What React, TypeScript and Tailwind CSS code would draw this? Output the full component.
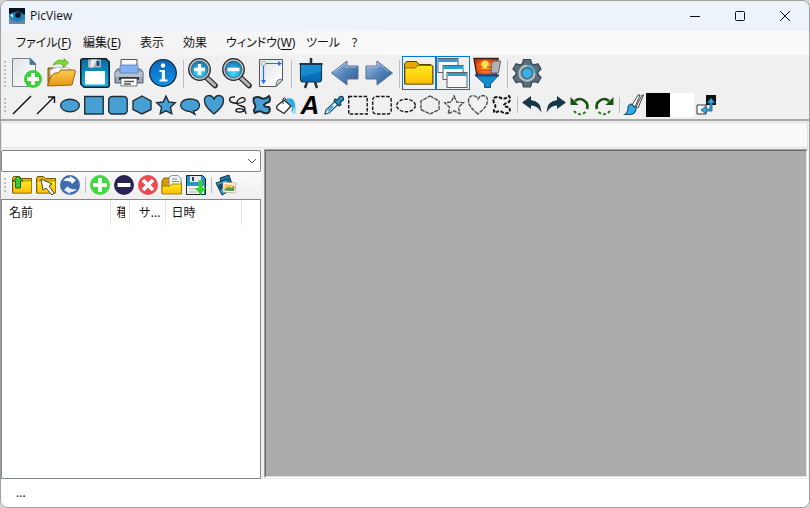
import React from "react";

type Kids = { children?: React.ReactNode };

const Big = ({ children }: Kids) => (
  <svg width="32" height="32" viewBox="0 0 32 32" fill="none" aria-hidden="true" className="shrink-0">{children}</svg>
);
const Small = ({ children }: Kids) => (
  <svg width="24" height="24" viewBox="0 0 24 24" fill="none" aria-hidden="true" className="shrink-0">{children}</svg>
);

function Defs() {
  return (
    <svg width="0" height="0" className="absolute" aria-hidden="true">
      <defs>
        <linearGradient id="paper" x1="0" y1="0" x2="1" y2="1"><stop stopColor="#dfe3e5" /><stop offset="1" stopColor="#fff" /></linearGradient>
        <linearGradient id="gold" x1="0" y1="0" x2="0" y2="1"><stop stopColor="#ffc94f" /><stop offset="1" stopColor="#e59a12" /></linearGradient>
        <linearGradient id="yellow" x1="0" y1="0" x2="0" y2="1"><stop stopColor="#ffea1a" /><stop offset="1" stopColor="#ffbd08" /></linearGradient>
        <linearGradient id="blue" x1="0" y1="0" x2="0" y2="1"><stop stopColor="#08679b" /><stop offset="1" stopColor="#18b8ed" /></linearGradient>
        <linearGradient id="info" x1="0" y1="0" x2="0" y2="1"><stop stopColor="#0869be" /><stop offset="1" stopColor="#0f91e4" /></linearGradient>
        <linearGradient id="steel" x1="0" y1="0" x2="1" y2="1"><stop stopColor="#a5bfe0" /><stop offset=".5" stopColor="#5584bd" /><stop offset="1" stopColor="#2b568c" /></linearGradient>
        <linearGradient id="board" x1="0" y1="0" x2="0" y2="1"><stop stopColor="#1286d0" /><stop offset="1" stopColor="#0569ae" /></linearGradient>
        <radialGradient id="lens" cx=".5" cy=".7" r=".65"><stop stopColor="#43e3ff" /><stop offset="1" stopColor="#1478b8" /></radialGradient>
        <radialGradient id="sun"><stop stopColor="#ffe94d" /><stop offset=".5" stopColor="#ff7a16" /><stop offset="1" stopColor="#c43a12" /></radialGradient>
      </defs>
    </svg>
  );
}

const NewIcon = () => (
  <Big>
    <path d="M1.500 1.500h18l5 5v23h-23z" fill="url(#paper)" stroke="#7a8388" />
    <path d="M19 1.500l6 6h-6z" fill="#2b7fc1" stroke="#43677f" strokeWidth=".7" />
    <circle cx="22" cy="22" r="9" fill="#3bd13b" />
    <path d="M22 16v12M16 22h12" stroke="#fff" strokeWidth="4" />
  </Big>
);
const OpenIcon = () => (
  <Big>
    <path d="M3 28V11h6l2 2h15v5" fill="#c98a1c" stroke="#845912" />
    <path d="M5 13l7-3 4 1 6-1 3 3v8H5z" fill="#f7f7f7" stroke="#a5a5a5" strokeWidth=".8" />
    <path d="M2.500 29L6 19l4-3h3l3-3h13.500l1 1L27 28z" fill="url(#gold)" stroke="#9a6612" />
    <path d="M8 8C11 3 15 2 19 4V1.500L23.500 6 18 10.500V8c-4-2-7-1-10 0z" fill="#77db26" stroke="#4d9e1c" strokeWidth=".7" />
  </Big>
);
const SaveIcon = () => (
  <Big>
    <path d="M4 1.800h23l3.200 3.200v23q0 2.200-2.200 2.200H5L1.800 27V4q0-2.200 2.200-2.200z" fill="url(#blue)" stroke="#101b23" strokeWidth="1.600" />
    <path d="M9 2.500h13v8H9z" fill="#a9b4bd" /><path d="M12 2.500h6l-4 8h-3z" fill="#e4e9ed" />
    <path d="M17.500 4h3v5h-3z" fill="#145473" />
    <rect x="6" y="14" width="20" height="13.500" rx="1" fill="#fff" />
  </Big>
);
const PrinterIcon = () => (
  <Big>
    <path d="M8 12V2.500h16V12" fill="#f7f7f7" stroke="#4e5357" />
    <path d="M4.500 12h23l2.500 3v11H2V15z" fill="#98a6b8" stroke="#56616e" />
    <path d="M2.500 15h27v5h-27z" fill="#b5c0cd" />
    <path d="M7 9q0-1 1-1h16q1 0 1 1v7H7z" fill="#83b1ef" stroke="#547fc0" strokeWidth=".8" />
    <path d="M6 20h20v3H6z" fill="#30363c" /><path d="M8 21.500h16v7.500H8z" fill="#fff" stroke="#555" strokeWidth=".8" />
    <path d="M11 24.500h10M11 27h7" stroke="#555" strokeWidth="1.300" />
  </Big>
);
const InfoIcon = () => (
  <Big>
    <circle cx="16" cy="16" r="13.300" fill="url(#info)" stroke="#12283a" strokeWidth="1.300" />
    <circle cx="16" cy="8.500" r="2.200" fill="#fff" />
    <path d="M12.500 13h5.500v9.500h2.500v2h-8v-2h2.300V15h-2.300z" fill="#fff" />
  </Big>
);
const Magnifier = ({ plus }: { plus: boolean }) => (
  <Big>
    <path d="M20 21l8 7.500" stroke="#252525" strokeWidth="5.500" strokeLinecap="round" />
    <path d="M20 21l7.700 7.200" stroke="#b5b5b5" strokeWidth="3.200" strokeLinecap="round" />
    <circle cx="12.500" cy="12.500" r="10.800" fill="#c8cdd0" stroke="#252b30" strokeWidth="1.300" />
    <circle cx="12.500" cy="12.500" r="8.400" fill="url(#lens)" stroke="#405665" strokeWidth=".8" />
    <path d={plus ? "M12.500 7v11M7 12.500h11" : "M6.500 12.500h12"} stroke="#fff" strokeWidth="3.300" />
  </Big>
);
const PageSizeIcon = () => (
  <Big>
    <path d="M4.500 2.500h23V23L21 29.500H4.500z" fill="url(#paper)" stroke="#55595b" />
    <path d="M27.500 23c-3-2-6.500 0-6.500 6.500z" fill="#d4d6d7" stroke="#606365" />
    <path d="M10 6.500h15M8.500 8v18" stroke="#2471f3" strokeWidth="1.200" />
    <path d="M23 4l4 2.500L23 9zM6 23l2.500 4 2.500-4z" fill="#2471f3" />
    <circle cx="8.500" cy="6.500" r="2" fill="#eee" stroke="#aaa" />
  </Big>
);
const EaselIcon = () => (
  <Big>
    <path d="M16 1v6M12 25l-2 6M20 25l2 6" stroke="#26343d" strokeWidth="2.500" />
    <path d="M5.500 7h21v15q0 3-3 3h-15q-3 0-3-3z" fill="url(#board)" stroke="#18384d" strokeWidth="1.200" />
    <path d="M6 8h20v6L6 20z" fill="#2b9be0" fillOpacity=".45" /><path d="M4.500 7h23" stroke="#18384d" strokeWidth="2" />
  </Big>
);
const Arrow = ({ right }: { right?: boolean }) => (
  <Big>
    <path d={right ? "M29.500 16L14 4v5H3v13h11v6z" : "M2.500 16L18 4v5h11v13H18v6z"} fill="url(#steel)" stroke="#58718e" />
    <path d={right ? "M4 10h11V6l11 8.500" : "M5 15L17 6v4h11"} stroke="#d6e3f4" strokeOpacity=".55" />
  </Big>
);
const FolderIcon = () => (
  <Big>
    <path d="M1.500 27V7l2-2.500h10L16 7.500h12l2 2V27z" fill="#e8a500" stroke="#51450a" />
    <path d="M2 11h10l3-2.500h14.500v18.500H2z" fill="url(#yellow)" stroke="#6e5908" strokeWidth=".8" />
  </Big>
);
const windowFrames = [
  { x: 1, y: 1.5, w: 20, h: 14 },
  { x: 6, y: 8.5, w: 20, h: 14 },
  { x: 10, y: 15.5, w: 20, h: 15 },
];
const WindowsIcon = () => (
  <Big>
    {windowFrames.map(({ x, y, w, h }) => (
      <g key={y}>
        <rect x={x} y={y} width={w} height={h} fill="#f7f7f7" stroke="#4b5358" strokeWidth=".9" />
        <path d={`M${x + 0.5} ${y + 2}h${w - 1}`} stroke="#27a0d8" strokeWidth="3" />
      </g>
    ))}
  </Big>
);
const FunnelIcon = () => (
  <Big>
    <path d="M3 1.500h24L25 19H6z" fill="url(#sun)" stroke="#35211a" strokeWidth="1.400" />
    <circle cx="14" cy="7" r="3.500" fill="#ffe44c" /><path d="M5 13h18M6 10h5M16 10h5" stroke="#e8451a" strokeWidth="1.300" />
    <path d="M20.500 7l2-3h7l-2 12h-7.500z" fill="#aeb3b7" stroke="#63676a" />
    <path d="M4 18h24l-8.500 9v3.500h-6V27z" fill="#128dcc" stroke="#0a508e" /><path d="M4.500 18.500h23" stroke="#263e91" strokeWidth="2" />
  </Big>
);
const GearIcon = () => (
  <Big>
    <path d="M12.500 2.500h7l1 4 2.500 1.400 4-1.200 3 5.300-3 3v2.500l3 3-3 5.300-4-1.200-2.500 1.400-1 4h-7l-1-4L9 24.600l-4 1.200-3-5.300 3-3V15l-3-3 3-5.300 4 1.200 2.500-1.400z" fill="#5b6f7b" stroke="#34454f" strokeWidth="1.200" strokeLinejoin="round" />
    <circle cx="16" cy="16.200" r="7.500" stroke="#b8c3c9" strokeWidth="2" />
    <path d="M16 8.700a7.500 7.500 0 017.500 7.500" stroke="#3baae1" strokeWidth="2" />
    <circle cx="16" cy="16.200" r="4.500" fill="#34b2ef" />
  </Big>
);

const starPath = "M12 3l2.800 6 6.500.8-4.800 4.500 1.300 6.500-5.800-3-5.800 3 1.300-6.500L2.700 9.800l6.500-.8z";
const heartPath = "M12 21C5 15 2.500 12 2.500 7.500 2.500 1.500 9.500 1 12 6c2.500-5 9.500-4.500 9.500 1.500C21.500 12 19 15 12 21z";
const hexPath = "M12 3l9 5v8.500L12 21l-9-4.500V8z";
const blobPath = "M4 5q3-2 7 0t8-2q2 3 0 6-4 1-5 3 0 2 5 2 2 4-1 6-3 1-6-1t-7 1q-2-2 0-5 1-3-1-5-1-3 0-5z";

function Shape({ kind, dashed }: { kind: string; dashed?: boolean }) {
  const dark = kind === "rect" || kind === "round" || kind === "blob" || kind === "ellipse";
  const p = {
    fill: dashed ? "none" : "#489fd3",
    stroke: dashed ? (dark ? "#151515" : "#4f4f4f") : "#1f2e38",
    strokeWidth: kind === "blob" ? 2 : 1.4,
    strokeDasharray: dashed ? (dark ? "3.500 1.500" : "4 1") : undefined,
  };
  return (
    <Small>
      {kind === "ellipse" && <ellipse cx="12" cy="12.500" rx="9.300" ry="6.300" {...p} />}
      {kind === "rect" && <rect x="2.700" y="3.500" width="18.500" height="17.500" {...p} />}
      {kind === "round" && <rect x="2.700" y="3.500" width="18.500" height="17.500" rx="3.500" {...p} />}
      {kind === "hex" && <path d={hexPath} {...p} />}
      {kind === "star" && <path d={starPath} {...p} />}
      {kind === "heart" && <path d={heartPath} {...p} />}
      {kind === "blob" && <path d={blobPath} {...p} />}
    </Small>
  );
}
const LineIcon = () => <Small><path d="M3 21L21 3" stroke="#111" strokeWidth="1.400" /></Small>;
const ArrowLineIcon = () => <Small><path d="M3 21L20 4M14 4h6.500v6" stroke="#111" strokeWidth="1.400" /></Small>;
const BubbleIcon = () => (
  <Small><path d="M12 6c12 0 12 11 3.500 12l1.500 3.500-5-3C-.5 18-.5 6 12 6z" fill="#489fd3" stroke="#1f2e38" strokeWidth="1.300" /></Small>
);
const LassoIcon = () => (
  <Small><path d="M9 4C2 3 2 9 8 10c6 1 12-1 11-4-2-4-9 1-8 5 2 3 8 1 8 5 0 3-7 4-9 2-1-3 6-3 8-1 2 1 2 3 2 4" stroke="#111" strokeWidth="1.300" /></Small>
);
const BucketIcon = () => (
  <Small>
    <path d="M12 6q8-3 9 5 1 5 0 10-5-1-3-6-1-5-6-5z" fill="#2eaee5" /><path d="M20 14q3 4 1 7-4-1-2-4z" fill="#a9dff3" />
    <path d="M10 7l7 6-7 7.500L3 16q-1-3 1-4z" fill="#fff" stroke="#222" strokeWidth="1.200" /><path d="M9 11V6q2-3 3 1" stroke="#222" />
  </Small>
);
const EyedropperIcon = () => (
  <Small>
    <path d="M3 21l1-4 9-8.500 3 3L7 20z" fill="#e8f7ff" stroke="#245672" strokeWidth="1.200" />
    <path d="M13 6l2 1 3-3.500q4-1 3.500 3.500L18 9.500l1 2-2 1.500-5-5z" fill="#2292cc" stroke="#16364b" strokeWidth="1.100" />
    <path d="M6 18l5-5" stroke="#38aee0" strokeWidth="2" />
  </Small>
);
const TurnIcon = ({ redo }: { redo?: boolean }) => (
  <Small><path d={redo ? "M22 9.500L13 3v4Q3 8 2.500 19.500q4-7 10.500-7V16z" : "M2 9.500L11 3v4q10 1 10.500 12.500-4-7-10.500-7V16z"} fill="#17384b" /></Small>
);
const RotateIcon = ({ right }: { right?: boolean }) => (
  <Small>
    <g transform={right ? "matrix(-1 0 0 1 24 0)" : undefined}>
      <path d="M7 8A7.500 7.500 0 0119 16" stroke="#14530d" strokeWidth="2.600" />
      <path d="M2.500 4v8h8z" fill="#14530d" />
      <path d="M17.500 19A7.500 7.500 0 015.500 17" stroke="#2f7a24" strokeWidth="2" strokeDasharray="3 2" />
    </g>
  </Small>
);
const BrushIcon = () => (
  <Small>
    <path d="M10 12l6-10h2l-5 12zM14 14l6-12h1.500L16 15z" fill="#fafafa" stroke="#333" strokeWidth=".9" />
    <path d="M9 11l5 4q0 6-6 6.500H3q3-2 3-6.500 0-3 3-4z" fill="#2eaee5" stroke="#1c5378" strokeWidth="1.200" />
  </Small>
);
const SwapIcon = () => (
  <Small>
    <path d="M12 2h10v10H12z" fill="#111" /><path d="M3 12h9v9H3z" fill="#fff" stroke="#333" />
    <path d="M17 5l4 5h-3v8h-6v3l-5-4 5-4v3h4v-6h-3z" fill="#3ba7db" stroke="#1b5779" strokeWidth=".8" />
  </Small>
);

const Folder24 = () => (
  <><path d="M2.500 20V5.500l1-2h6l2 2h10V20z" fill="#eeb300" stroke="#6b560a" /><path d="M3 8h18.500v12H3z" fill="url(#yellow)" stroke="#8d6d0a" strokeWidth=".6" /></>
);
const UpIcon = () => <Small><Folder24 /><path d="M8 3l5 5h-2.500v7h-5V8H3z" fill="#38c83c" stroke="#184e1a" strokeWidth=".9" /></Small>;
const PickIcon = () => <Small><Folder24 /><path d="M7 6l2 11 3-2 6 7 2-2-5-7 3-2z" fill="#fff" stroke="#333" strokeWidth=".9" /></Small>;
const RefreshIcon = () => (
  <Small>
    <circle cx="12" cy="12" r="10" fill="#426dac" />
    <path d="M5 8q3-4 7-3V3l6 4-4 4-1-2q-5-2-8-1z" fill="#fff" />
    <path d="M19 16q-3 4-7 3v2l-6-4 4-4 1 2q5 2 8 1z" fill="#e3edf8" />
  </Small>
);
const Disc = ({ kind }: { kind: "plus" | "minus" | "x" }) => (
  <Small>
    <circle cx="12" cy="12" r="10" fill={kind === "plus" ? "#43d843" : kind === "minus" ? "#282353" : "#e94b50"} />
    <path d={kind === "plus" ? "M12 5v14M5 12h14" : kind === "minus" ? "M5.500 12h13" : "M7 7l10 10M17 7L7 17"} stroke="#fff" strokeWidth="3.800" />
  </Small>
);
const FolderDocsIcon = () => (
  <Small>
    <path d="M2 20V8l2-3h5l2 3h10v12z" fill="#d99a00" stroke="#82600a" />
    <path d="M9 4l3-1.500h6l3 3V14H9z" fill="#f4f4f4" stroke="#777" strokeWidth=".8" /><path d="M12 6h5M12 8.500h7" stroke="#888" />
    <path d="M2 21v-8h8l2-2h9.500v10z" fill="url(#yellow)" stroke="#8b6b0d" strokeWidth=".8" />
  </Small>
);
const SaveListIcon = () => (
  <Small>
    <path d="M2.500 2.500h16l3 3v16h-19z" fill="#2795cd" stroke="#19262e" /><path d="M6 3h11v6H6z" fill="#e4e9eb" /><path d="M8 4h2v4H8z" fill="#234656" />
    <path d="M3 13h17v8H3z" fill="#f4f4f4" /><path d="M5 16h8M5 19h8" stroke="#aaa" />
    <path d="M14.500 7h4v8H22l-5.500 7-5.500-7h3.500z" fill="#39cf3c" />
  </Small>
);
const PhotosIcon = () => (
  <Small>
    <path d="M6 5l9-3 4 12-9 5z" fill="#0e78b8" stroke="#18384d" /><path d="M2 10l12-4 4 10-10 6z" fill="#249ede" stroke="#202e38" />
    <path d="M4 12l10-4 2 3-10 6z" fill="#124568" /><path d="M9 9l13 1-1 10-12-1z" fill="#fff" stroke="#b9a993" strokeWidth=".8" />
    <path d="M10.500 11l10 1-.5 6-9.500-.6z" fill="#ffc15b" /><path d="M10.500 16l4-2 3 1 3-2-.5 5-9.500-.6z" fill="#4b9f42" />
  </Small>
);

function BigButton({ label, pressed, children }: { label: string; pressed?: boolean } & Kids) {
  return (
    <button aria-label={label} aria-pressed={pressed} className={`flex size-[34px] shrink-0 items-center justify-center ${pressed ? "border border-[#0078d7]" : ""}`}>
      {children}
    </button>
  );
}
const Btn = ({ label, children }: { label: string } & Kids) => (
  <button aria-label={label} className="flex size-6 shrink-0 items-center justify-center">{children}</button>
);
const Sep = ({ tall }: { tall?: boolean }) => (
  <div className="flex w-1.5 shrink-0 items-center justify-center"><div className={`w-px bg-[#bdbdbd] ${tall ? "h-7" : "h-4"}`} /></div>
);
const Grip = ({ tall }: { tall?: boolean }) => (
  <div className="flex w-[9px] shrink-0 flex-col items-start justify-center gap-0.5 pl-[3px]">
    {Array.from({ length: tall ? 7 : 4 }, (_, i) => <span key={i} className="size-0.5 bg-[#bdbdbd]" />)}
  </div>
);

const menus = [
  { name: "ファイル", key: "F", width: "w-[67px]" },
  { name: "編集", key: "E", width: "w-[57px]" },
  { name: "表示", width: "w-[43px]" },
  { name: "効果", width: "w-[43px]" },
  { name: "ウィンドウ", key: "W", width: "w-[80px]" },
  { name: "ツール", width: "w-[46px]" },
  { name: "?", width: "w-6" },
];
const shapes = ["rect", "round", "hex", "star"];
const selections = ["rect", "round", "ellipse", "hex", "star", "heart", "blob"];

export default function App() {
  return (
    <div className="h-screen w-full bg-[#d4d4d4] font-['Noto_Sans','Noto_Sans_CJK_JP',sans-serif] text-xs text-[#111]">
      <Defs />
      <div className="flex h-full flex-col overflow-hidden rounded-lg border border-[#a0a0a0] bg-white">
        <header className="flex h-[30px] shrink-0 items-center bg-[#eef3fa] pr-0.5 pl-2">
          <svg width="16" height="16" viewBox="0 0 16 16" aria-hidden="true">
            <rect width="16" height="16" rx="1" fill="#162c3f" /><path d="M0 6q8-4 16 1v6l-5 2-6-1-5-3z" fill="#2383b8" />
            <path d="M0 0h16v6Q8 1 0 6z" fill="#06121e" /><circle cx="8.500" cy="8" r="4.500" fill="#1580bd" /><circle cx="9" cy="7" r="2.800" fill="#03101b" />
            <path d="M0 9q4 6 10 5l6-3v5H0z" fill="#7186a2" /><path d="M1 7l3-1v4z" fill="#cfeaf5" />
          </svg>
          <h1 className="ml-[5px] flex-1 font-['Open_Sans','Noto_Sans',sans-serif] text-xs">PicView</h1>
          <button aria-label="最小化" className="flex h-full w-[45px] items-center justify-center"><svg width="12" height="12" fill="none" stroke="#111"><path d="M1 6.500h10" /></svg></button>
          <button aria-label="最大化" className="flex h-full w-[45px] items-center justify-center"><svg width="12" height="12" fill="none" stroke="#111"><rect x="1.500" y="1.500" width="9" height="9" rx="1" /></svg></button>
          <button aria-label="閉じる" className="flex h-full w-[45px] items-center justify-center"><svg width="12" height="12" fill="none" stroke="#111"><path d="M1 1l10 10M11 1L1 11" /></svg></button>
        </header>

        <nav className="flex h-6 shrink-0 items-center bg-linear-to-r from-[#f0f0f0] to-[#fafafa] to-50% pl-[15px] [font-feature-settings:'palt']">
          {menus.map((m) => (
            <button key={m.name} className={`shrink-0 text-left whitespace-nowrap ${m.width}`}>
              {m.name}{m.key && <>(<u className="underline-offset-2">{m.key}</u>)</>}
            </button>
          ))}
        </nav>

        <div className="shrink-0 border-b-2 border-[#a8a8a8] bg-[#f0f0f0]">
          <div role="toolbar" aria-label="標準" className="flex h-[37px] pt-px">
            <Grip tall />
            <BigButton label="新規"><NewIcon /></BigButton>
            <BigButton label="開く"><OpenIcon /></BigButton>
            <BigButton label="保存"><SaveIcon /></BigButton>
            <BigButton label="印刷"><PrinterIcon /></BigButton>
            <BigButton label="情報"><InfoIcon /></BigButton>
            <Sep tall />
            <BigButton label="拡大"><Magnifier plus /></BigButton>
            <BigButton label="縮小"><Magnifier plus={false} /></BigButton>
            <BigButton label="サイズ"><PageSizeIcon /></BigButton>
            <Sep tall />
            <BigButton label="スライドショー"><EaselIcon /></BigButton>
            <BigButton label="前へ"><Arrow /></BigButton>
            <BigButton label="次へ"><Arrow right /></BigButton>
            <Sep tall />
            <BigButton label="フォルダー" pressed><FolderIcon /></BigButton>
            <BigButton label="ウィンドウ一覧" pressed><WindowsIcon /></BigButton>
            <BigButton label="フィルター"><FunnelIcon /></BigButton>
            <Sep tall />
            <BigButton label="設定"><GearIcon /></BigButton>
          </div>
          <div role="toolbar" aria-label="描画" className="flex h-[27px] pt-px pb-0.5">
            <Grip />
            <Btn label="直線"><LineIcon /></Btn>
            <Btn label="矢印"><ArrowLineIcon /></Btn>
            <Btn label="楕円"><Shape kind="ellipse" /></Btn>
            {shapes.map((s) => <Btn key={s} label={s}><Shape kind={s} /></Btn>)}
            <Btn label="吹き出し"><BubbleIcon /></Btn>
            <Btn label="ハート"><Shape kind="heart" /></Btn>
            <Btn label="自由線"><LassoIcon /></Btn>
            <Btn label="自由図形"><Shape kind="blob" /></Btn>
            <Btn label="塗りつぶし"><BucketIcon /></Btn>
            <button aria-label="文字" className="flex size-6 shrink-0 items-center justify-center font-['Liberation_Sans',sans-serif] text-[26px] leading-6 font-bold text-black italic">A</button>
            <Btn label="スポイト"><EyedropperIcon /></Btn>
            {selections.map((s) => <Btn key={s} label={`選択 ${s}`}><Shape kind={s} dashed /></Btn>)}
            <Sep />
            <Btn label="元に戻す"><TurnIcon /></Btn>
            <Btn label="やり直し"><TurnIcon redo /></Btn>
            <Btn label="左回転"><RotateIcon /></Btn>
            <Btn label="右回転"><RotateIcon right /></Btn>
            <Sep />
            <Btn label="ブラシ"><BrushIcon /></Btn>
            <button aria-label="前景色" className="size-6 shrink-0 bg-black" />
            <button aria-label="背景色" className="size-6 shrink-0 bg-white" />
            <Btn label="色の入れ替え"><SwapIcon /></Btn>
          </div>
        </div>

        <div className="h-7 shrink-0 bg-[#f0f0f0] pt-px pr-px pb-px">
          <div className="h-full border border-[#e3e3e3] bg-[#f9f9f9]" />
        </div>

        <main className="flex min-h-0 flex-1 bg-[#f0f0f0]">
          <aside className="flex w-[260px] shrink-0 flex-col">
            <div className="relative mt-px h-[22px] shrink-0">
              <select aria-label="フォルダー" className="size-full appearance-none rounded-xs border border-[#858585] bg-white" />
              <svg className="pointer-events-none absolute top-1.5 right-1" width="10" height="10" fill="none" stroke="#555"><path d="M1 3l4 4 4-4" /></svg>
            </div>
            <div role="toolbar" aria-label="一覧" className="flex h-[27px] shrink-0 bg-linear-to-b from-[#fafafa] to-[#eeeeee] pt-px pb-0.5">
              <Grip />
              <Btn label="上へ"><UpIcon /></Btn>
              <Btn label="選択"><PickIcon /></Btn>
              <Btn label="更新"><RefreshIcon /></Btn>
              <Sep />
              <Btn label="追加"><Disc kind="plus" /></Btn>
              <Btn label="除外"><Disc kind="minus" /></Btn>
              <Btn label="削除"><Disc kind="x" /></Btn>
              <Btn label="一覧を開く"><FolderDocsIcon /></Btn>
              <Btn label="一覧を保存"><SaveListIcon /></Btn>
              <Sep />
              <Btn label="画像"><PhotosIcon /></Btn>
            </div>
            <div className="min-h-0 flex-1 border border-[#828790] bg-white">
              <table className="w-60 table-fixed border-collapse text-left">
                <thead>
                  <tr className="h-[25px] *:border-r *:border-[#e5e5e5] *:p-0 *:font-normal *:whitespace-nowrap">
                    <th className="w-[108px]"><span className="pl-[7px]">名前</span></th>
                    <th className="w-[19px]"><div className="ml-1.5 w-2 overflow-hidden">種</div></th>
                    <th className="w-9"><div className="pr-1 text-right">サ...</div></th>
                    <th><span className="pl-1.5">日時</span></th>
                  </tr>
                </thead>
              </table>
            </div>
          </aside>
          <section aria-label="画像表示" className="mr-px mb-px ml-[3px] min-w-0 flex-1 border border-t-[#a0a0a0] border-r-white border-b-white border-l-[#a0a0a0]">
            <div className="h-full border border-t-[#696969] border-r-[#e3e3e3] border-b-[#e3e3e3] border-l-[#696969] bg-[#ababab]" />
          </section>
        </main>

        <footer className="flex h-7 shrink-0 items-center bg-white pl-[15px]">...</footer>
      </div>
    </div>
  );
}
